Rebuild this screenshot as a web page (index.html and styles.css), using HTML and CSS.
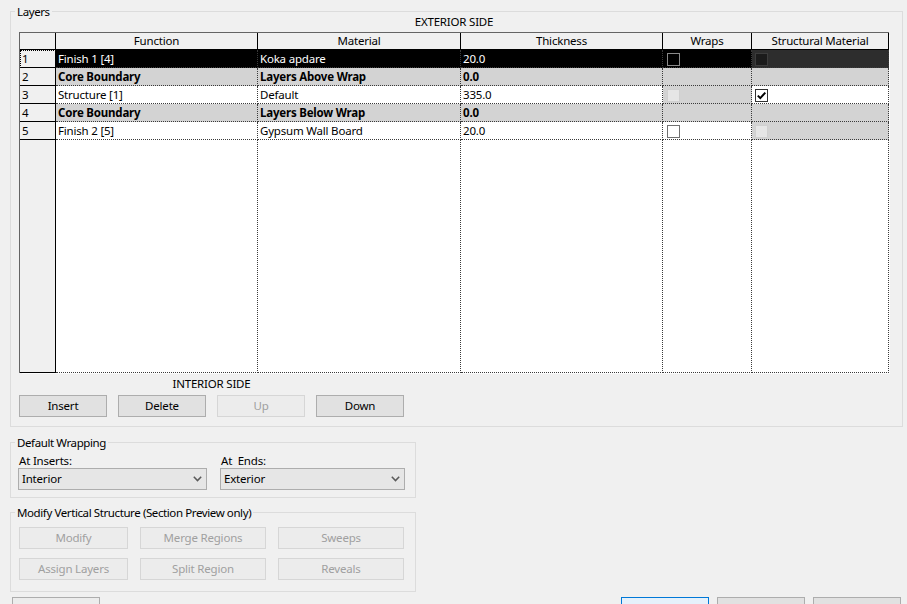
FILE: index.html
```html
<!DOCTYPE html>
<html>
<head>
<meta charset="utf-8">
<title>Edit Assembly</title>
<link rel="stylesheet" href="styles.css">
</head>
<body>
<div class="dialog">
  <div class="group layers">
    <div class="legend">Layers</div>
    <div class="side-label ext">EXTERIOR SIDE</div>
    <div class="grid">
      <div class="c hd"></div>
      <div class="c hd">Function</div>
      <div class="c hd">Material</div>
      <div class="c hd">Thickness</div>
      <div class="c hd">Wraps</div>
      <div class="c hd">Structural Material</div>

      <div class="c rh focus">1</div>
      <div class="c sel">Finish 1 [4]</div>
      <div class="c sel">Koka apdare</div>
      <div class="c sel">20.0</div>
      <div class="c sel chk wr"><span class="cb cb-sel"></span></div>
      <div class="c dark chk st"><span class="cb cb-dark"></span></div>

      <div class="c rh">2</div>
      <div class="c gray b">Core Boundary</div>
      <div class="c gray b">Layers Above Wrap</div>
      <div class="c gray b">0.0</div>
      <div class="c gray"></div>
      <div class="c gray"></div>

      <div class="c rh">3</div>
      <div class="c">Structure [1]</div>
      <div class="c">Default</div>
      <div class="c">335.0</div>
      <div class="c gray chk wr"><span class="cb cb-dis"></span></div>
      <div class="c chk st"><span class="cb cb-on"><svg viewBox="0 0 11 11" width="11" height="11"><path d="M1.8 5.6 L4.3 8.1 L9.3 2.6" fill="none" stroke="#000" stroke-width="2"/></svg></span></div>

      <div class="c rh">4</div>
      <div class="c gray b">Core Boundary</div>
      <div class="c gray b">Layers Below Wrap</div>
      <div class="c gray b">0.0</div>
      <div class="c gray"></div>
      <div class="c gray"></div>

      <div class="c rh">5</div>
      <div class="c">Finish 2 [5]</div>
      <div class="c">Gypsum Wall Board</div>
      <div class="c">20.0</div>
      <div class="c chk wr"><span class="cb"></span></div>
      <div class="c gray chk st"><span class="cb cb-dis"></span></div>

      <div class="c rh"></div>
      <div class="c"></div>
      <div class="c"></div>
      <div class="c"></div>
      <div class="c"></div>
      <div class="c"></div>
    </div>
    <div class="under">
      <div class="side-label int">INTERIOR SIDE</div>
      <div class="btnrow">
        <button class="btn w88">Insert</button>
        <button class="btn w88">Delete</button>
        <button class="btn w88 dis">Up</button>
        <button class="btn w88">Down</button>
      </div>
    </div>
  </div>

  <div class="group wrapping">
    <div class="legend">Default Wrapping</div>
    <div class="wrap-cols">
      <div class="wcol first">
        <div class="flabel">At Inserts:</div>
        <div class="select"><span>Interior</span><svg viewBox="0 0 9 6" width="9" height="6"><path d="M0.8 0.8 L4.5 4.6 L8.2 0.8" fill="none" stroke="#5a5a5a" stroke-width="1.5"/></svg></div>
      </div>
      <div class="wcol second">
        <div class="flabel">At&nbsp; Ends:</div>
        <div class="select"><span>Exterior</span><svg viewBox="0 0 9 6" width="9" height="6"><path d="M0.8 0.8 L4.5 4.6 L8.2 0.8" fill="none" stroke="#5a5a5a" stroke-width="1.5"/></svg></div>
      </div>
    </div>
  </div>

  <div class="group modify">
    <div class="legend">Modify Vertical Structure (Section Preview only)</div>
    <div class="mgrid">
      <button class="btn dis">Modify</button>
      <button class="btn dis">Merge Regions</button>
      <button class="btn dis">Sweeps</button>
      <button class="btn dis">Assign Layers</button>
      <button class="btn dis">Split Region</button>
      <button class="btn dis">Reveals</button>
    </div>
  </div>

  <div class="footer">
    <button class="btn w88 light foot">&lt;&lt; Preview</button>
    <div class="footer-right">
      <button class="btn w88 default foot">OK</button>
      <button class="btn w88 foot">Cancel</button>
      <button class="btn w88 foot">Help</button>
    </div>
  </div>
</div>
</body>
</html>
```
FILE: styles.css
```css
html, body {
  margin: 0;
  height: 100%;
  overflow: hidden;
}
body {
  background: #f0f0f0;
  font-family: "Noto Sans", "Open Sans", sans-serif;
  font-size: 11.5px;
  letter-spacing: -0.2px;
  color: #000;
}
.dialog {
  padding-left: 10px;
}
.group {
  position: relative;
  border: 1px solid #dcdcdc;
  box-sizing: border-box;
}
.legend {
  position: absolute;
  left: 4px;
  top: -8px;
  padding: 0 2px;
  background: #f0f0f0;
  line-height: 16px;
  letter-spacing: -0.4px;
  white-space: nowrap;
}

/* Layers group */
.layers {
  margin-top: 11px;
  width: 893px;
  height: 416px;
  padding: 2px 0 0 8px;
}
.side-label {
  line-height: 16px;
  text-align: center;
}
.ext {
  width: 870px;
  margin-bottom: 2px;
}
.grid {
  display: grid;
  grid-template-columns: 36px 202px 203px 202px 89px 137px;
  grid-template-rows: 17px repeat(5, 18px) 233px;
  width: max-content;
  border-left: 1px solid #646464;
  border-top: 1px solid #646464;
  box-shadow: 2px 2px 0 -1px #fbfbfb;
}
.c {
  box-sizing: border-box;
  background: #fff;
  border-right: 1px dotted #3a3a3a;
  border-bottom: 1px dotted #3a3a3a;
  line-height: 17px;
  padding-left: 2px;
  white-space: nowrap;
  overflow: hidden;
}
.hd {
  background: #f0f0f0;
  border-right: 1px solid #000;
  border-bottom: 1px solid #000;
  text-align: center;
  line-height: 16px;
  padding-left: 0;
}
.rh {
  background: #f0f0f0;
  border-right: 1px solid #000;
  border-bottom: 1px solid #000;
  padding-left: 2px;
}
.focus {
  outline: 1px dotted #000;
  outline-offset: -1px;
}
.sel {
  background: #000;
  color: #fff;
}
.dark {
  background: #2d2d2d;
}
.gray {
  background: #d3d3d3;
}
.b {
  font-weight: bold;
}
.chk {
  display: flex;
  align-items: flex-start;
  padding-top: 3px;
}
.wr { padding-left: 4px; }
.st { padding-left: 3px; }
.cb {
  display: block;
  width: 13px;
  height: 13px;
  box-sizing: border-box;
  border: 1px solid #707070;
  background: #fff;
}
.cb-sel {
  border-color: #8a8a8a;
  background: #000;
}
.cb-dark {
  border-color: #3c3c3c;
  background: #1b1b1b;
}
.cb-dis {
  border-color: #d0d0d0;
  background: #e6e6e6;
}
.cb-on {
  border-color: #333;
}
.cb-on svg {
  display: block;
}

.under {
  width: 385px;
}
.int {
  margin-top: 3px;
}
.btnrow {
  display: flex;
  gap: 11px;
  margin-top: 3px;
}

/* buttons */
.btn {
  box-sizing: border-box;
  height: 22px;
  margin: 0;
  padding: 0;
  border: 1px solid #adadad;
  background: #e1e1e1;
  font-family: "Noto Sans", "Open Sans", sans-serif;
  font-size: 11.5px;
  letter-spacing: -0.2px;
  color: #000;
  line-height: 18px;
  text-align: center;
}
.w88 { width: 88px; }
.btn.dis {
  background: #ececec;
  border-color: #d6d6d6;
  color: #a0a0a0;
}
.btn.light {
  background: #ececec;
}
.btn.default {
  border-color: #0078d7;
  background: #e5f1fb;
}
.btn.foot {
  padding-top: 5px;
}

/* Default wrapping */
.wrapping {
  margin-top: 15px;
  width: 406px;
  padding: 10px 10px 7px 7px;
}
.wrap-cols {
  display: flex;
  gap: 13px;
}
.flabel {
  line-height: 15px;
  padding-left: 1px;
}
.first { width: 189px; }
.second { width: 185px; }
.select {
  box-sizing: border-box;
  height: 22px;
  border: 1px solid #adadad;
  background: #e6e6e6;
  display: flex;
  align-items: center;
  justify-content: space-between;
  padding: 0 4px 0 3px;
  line-height: 18px;
}
.select svg {
  display: block;
}

/* Modify group */
.modify {
  margin-top: 14px;
  width: 406px;
  padding: 14px 0 11px 8px;
}
.mgrid {
  display: grid;
  grid-template-columns: 109px 126px 126px;
  column-gap: 12px;
  row-gap: 9px;
}

/* footer */
.footer {
  margin-top: 5px;
  margin-left: 2px;
  width: 889px;
  display: flex;
  justify-content: space-between;
}
.footer-right {
  display: flex;
  gap: 8px;
}
```
